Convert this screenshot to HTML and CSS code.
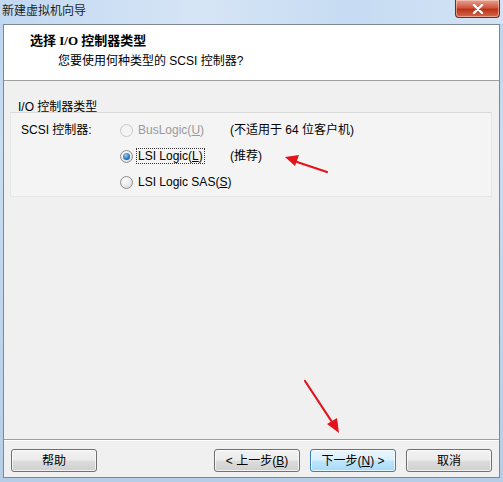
FILE: index.html
```html
<!DOCTYPE html>
<html lang="zh">
<head>
<meta charset="utf-8">
<title>新建虚拟机向导</title>
<link rel="stylesheet" href="styles.css">
</head>
<body>
<div class="window">
  <div class="titlebar">
    <span class="title">新建虚拟机向导</span>
    <span class="close" aria-label="关闭">
      <svg width="12" height="10" viewBox="0 0 12 10"><path d="M2 1 L10 9 M10 1 L2 9" stroke="#fff" stroke-width="2.4" stroke-linecap="round"/></svg>
    </span>
  </div>
  <div class="client">
    <div class="header">
      <div class="h-title">选择 I/O 控制器类型</div>
      <div class="h-sub">您要使用何种类型的 SCSI 控制器?</div>
    </div>
    <div class="body">
      <div class="group-label">I/O 控制器类型</div>
      <div class="group">
        <div class="grid">
          <div class="lbl">SCSI 控制器:</div>
          <div class="opt disabled"><span class="radio"></span><span class="otext">BusLogic(<u>U</u>)</span></div>
          <div class="note">(不适用于 64 位客户机)</div>

          <div class="lbl"></div>
          <div class="opt"><span class="radio checked"></span><span class="otext focus">LSI Logic(<u>L</u>)</span></div>
          <div class="note">(推荐)</div>

          <div class="lbl"></div>
          <div class="opt"><span class="radio"></span><span class="otext">LSI Logic SAS(<u>S</u>)</span></div>
          <div class="note"></div>
        </div>
      </div>
    </div>
    <div class="footer">
      <button class="btn">帮助</button>
      <div class="spacer"></div>
      <button class="btn">&lt; 上一步(<u>B</u>)</button>
      <button class="btn default">下一步(<u>N</u>) &gt;</button>
      <button class="btn">取消</button>
    </div>
  </div>
  <svg class="annot" width="503" height="482" viewBox="0 0 503 482">
    <line x1="327" y1="172" x2="294" y2="161" stroke="#e3131c" stroke-width="2.2" stroke-linecap="round"/>
    <polygon points="285,157 299,155 295,166" fill="#e3131c"/>
    <line x1="305" y1="381" x2="332" y2="422" stroke="#e3131c" stroke-width="2.2" stroke-linecap="round"/>
    <polygon points="339,433 327,424 337,418" fill="#e3131c"/>
  </svg>
</div>
</body>
</html>
```
FILE: styles.css
```css
* { box-sizing: border-box; }
html, body { margin: 0; padding: 0; }
body {
  width: 503px;
  height: 482px;
  overflow: hidden;
  font-family: "Liberation Sans", "Noto Sans CJK SC", sans-serif;
  font-size: 12px;
  color: #000;
}
.window {
  position: relative;
  width: 503px;
  height: 482px;
  display: flex;
  flex-direction: column;
  background: linear-gradient(180deg, #bcd4ef 0%, #c9ddf3 30%, #b6cde8 100%);
  padding: 0 3px 4px 3px;
}
.titlebar {
  height: 24px;
  flex: none;
  display: flex;
  align-items: flex-start;
  justify-content: space-between;
  margin: 0 -3px;
  background: linear-gradient(90deg, #c2d8f1 0%, #d6e5f6 40%, #c6dbf2 70%, #d3e3f5 100%);
}
.title {
  margin: 4px 0 0 2px;
  line-height: 14px;
  font-size: 12px;
  color: #1e1e1e;
}
.close {
  width: 45px;
  height: 18px;
  margin-right: 3px;
  border: 1px solid #6d2b22;
  border-top: none;
  border-radius: 0 0 4px 4px;
  background: linear-gradient(180deg, #e4a393 0%, #d0573f 45%, #bb3217 55%, #d56a4b 100%);
  display: flex;
  align-items: center;
  justify-content: center;
  box-shadow: inset 0 0 0 1px rgba(255,220,210,0.5);
}
.client {
  flex: 1;
  display: flex;
  flex-direction: column;
  border: 1px solid #7d8894;
  background: #f0f0f0;
}
.header {
  height: 56px;
  flex: none;
  background: #fff;
  border-bottom: 1px solid #a0a0a0;
  padding: 8px 0 0 26px;
}
.h-title {
  font-family: "Liberation Serif", "Noto Sans CJK SC", serif;
  font-weight: bold;
  line-height: 16px;
  font-size: 13px;
}
.h-sub {
  margin-top: 4px;
  padding-left: 28px;
  line-height: 16px;
}
.body {
  flex: 1;
  padding: 18px 7px 0 6px;
}
.group-label {
  line-height: 16px;
  padding-left: 8px;
}
.group {
  margin-top: -3px;
  height: 85px;
  border: 1px solid #e6e6e6;
  border-top-color: #dadada;
  background: #f4f4f4;
  padding: 9px 0 0 10px;
}
.grid {
  display: grid;
  grid-template-columns: 99px 110px 1fr;
  row-gap: 10px;
}
.lbl, .note, .opt { line-height: 16px; height: 16px; white-space: nowrap; }
.opt { display: flex; align-items: center; }
.radio {
  width: 13px;
  height: 13px;
  border-radius: 50%;
  border: 1px solid #8e8f8f;
  background: radial-gradient(circle at 40% 35%, #ffffff 0%, #e6e6e6 60%, #d2d2d2 100%);
  flex: none;
  display: inline-flex;
  align-items: center;
  justify-content: center;
}
.radio.checked::after {
  content: "";
  width: 7px;
  height: 7px;
  border-radius: 50%;
  background: radial-gradient(circle at 40% 35%, #9ad0f5 0%, #2a78bd 55%, #1a4f85 100%);
}
.opt.disabled .radio {
  border-color: #c8c8c8;
  background: #f4f4f4;
}
.opt.disabled .otext { color: #9a9a9a; }
.otext {
  margin-left: 3px;
  padding: 0 1px;
  line-height: 14px;
  border: 1px solid transparent;
}
.otext.focus { border: 1px dotted #333; }
.footer {
  height: 38px;
  flex: none;
  border-top: 1px solid #a0a0a0;
  box-shadow: inset 0 1px 0 #fff;
  display: flex;
  align-items: flex-start;
  padding: 9px 7px 0 7px;
  gap: 10px;
}
.spacer { flex: 1; }
.btn {
  width: 86px;
  height: 23px;
  font-family: "Liberation Sans", "Noto Sans CJK SC", sans-serif;
  font-size: 12px;
  color: #000;
  border: 1px solid #707070;
  border-radius: 3px;
  background: linear-gradient(180deg, #f2f2f2 0%, #ebebeb 48%, #dddddd 52%, #cfcfcf 100%);
  box-shadow: inset 0 0 0 1px rgba(255,255,255,0.7);
  padding: 0;
  line-height: 20px;
}
.btn.default {
  border-color: #3c7fb1;
  background: linear-gradient(180deg, #eaf6fd 0%, #d9f0fc 48%, #bee6fd 52%, #a7d9f5 100%);
}
.annot {
  position: absolute;
  left: 0;
  top: 0;
  pointer-events: none;
}
```
